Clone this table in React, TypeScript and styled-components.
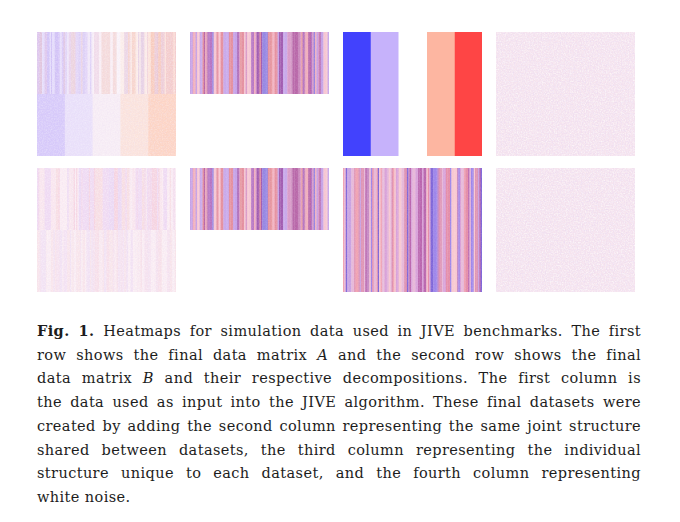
import React, { useMemo } from 'react'
import styled, { createGlobalStyle } from 'styled-components'

const GlobalStyle = createGlobalStyle`
  html, body {
    margin: 0;
    padding: 0;
    background: #fff;
  }
`

const Figure = styled.figure`
  margin: 0;
  padding: 32px 0 0 37px;
  width: 604px;
`

const Grid = styled.div`
  display: grid;
  grid-template-columns: repeat(4, 139px);
  column-gap: 14px;
  row-gap: 12px;
  align-items: start;
`

const Pair = styled.div`
  display: flex;
  gap: 28px;
`

const Map = styled.svg`
  display: block;
`

const Caption = styled.figcaption`
  margin-top: 27px;
  font-family: "DejaVu Serif", "Liberation Serif", serif;
  font-size: 14.5px;
  line-height: 23.7px;
  letter-spacing: 0.4px;
  color: #1d1d1d;
`

const Line = styled.span<{ $last?: boolean }>`
  display: block;
  white-space: nowrap;
  text-align: ${p => (p.$last ? 'left' : 'justify')};
  text-align-last: ${p => (p.$last ? 'left' : 'justify')};
`

const Label = styled.b`
  font-weight: 700;
`

const rng = (seed: number) => () => {
  seed = (seed + 0x6d2b79f5) | 0
  let t = Math.imul(seed ^ (seed >>> 15), 1 | seed)
  t = (t + Math.imul(t ^ (t >>> 7), 61 | t)) ^ t
  return ((t ^ (t >>> 14)) >>> 0) / 4294967296
}

const JOINT = ['#b574c3', '#c685ba', '#e48f9e', '#a05ab0', '#c8a8ea', '#9585e2', '#f1aebc', '#d99ac8', '#f6c6d2', '#b866a8', '#c5a0e6', '#e89aa0']
const INDIV = ['#dd8fb0', '#c9a2e2', '#b964ad', '#9c84ea', '#f0a2b2', '#e7b8d8', '#f8c8d0', '#c78ac4', '#d8a0d8', '#7f66d8', '#e48ca8']
const PALE = ['#eed8f6', '#f9dde0', '#f2d6ec', '#fbe9ef', '#e8d6f8', '#f7cfdc', '#fdf2f6']
const SHADE = ['#ffffff', '#ffffff', '#c9b6f2', '#e9c2d8', '#f3c0b2', '#d8c4f4', '#fff4f6']

const stripes = (seed: number, count: number, palette: string[]) => {
  const r = rng(seed)
  const out: string[] = []
  while (out.length < count) {
    const c = palette[Math.floor(r() * palette.length)]
    const run = 1 + Math.floor(r() * r() * 4)
    for (let i = 0; i < run && out.length < count; i++) out.push(c)
  }
  return out
}

type NoiseProps = { id: string; seed: number; w: number; h: number; y?: number; strength?: number }

const Noise = ({ id, seed, w, h, y = 0, strength = 1 }: NoiseProps) => (
  <>
    <defs>
      <filter id={`${id}w`} x="0" y="0" width="100%" height="100%">
        <feTurbulence type="fractalNoise" baseFrequency="0.75" numOctaves="2" seed={seed} />
        <feColorMatrix type="matrix" values="0 0 0 0 1  0 0 0 0 1  0 0 0 0 1  1.6 0 0 0 -0.62" />
      </filter>
      <filter id={`${id}p`} x="0" y="0" width="100%" height="100%">
        <feTurbulence type="fractalNoise" baseFrequency="0.75" numOctaves="2" seed={seed + 7} />
        <feColorMatrix type="matrix" values="0 0 0 0 0.8  0 0 0 0 0.68  0 0 0 0 0.9  0 1.6 0 0 -0.62" />
      </filter>
    </defs>
    <rect x="0" y={y} width={w} height={h} filter={`url(#${id}w)`} opacity={0.9 * strength} />
    <rect x="0" y={y} width={w} height={h} filter={`url(#${id}p)`} opacity={0.7 * strength} />
  </>
)

const Stripes = ({ cols, w, h, y = 0, opacity = 1 }: { cols: string[]; w: number; h: number; y?: number; opacity?: number }) => {
  const cw = w / cols.length
  return (
    <g opacity={opacity}>
      {cols.map((c, i) => (
        <rect key={i} x={i * cw} y={y} width={cw + 0.35} height={h} fill={c} />
      ))}
    </g>
  )
}

const BLOCKS_A = ['#d6c9fa', '#e9e0fa', '#f7edf5', '#fbe3dc', '#fdd4c4']

const DataA = () => {
  const top = useMemo(() => stripes(11, 110, SHADE), [])
  return (
    <Map width="139" height="124" viewBox="0 0 139 124">
      {BLOCKS_A.map((c, i) => (
        <rect key={i} x={i * 27.8} y="0" width="28.2" height="124" fill={c} />
      ))}
      <Stripes cols={top} w={139} h={62} opacity={0.4} />
      <Noise id="na" seed={2} w={139} h={124} strength={0.45} />
    </Map>
  )
}

const DataB = () => {
  const top = useMemo(() => stripes(23, 110, PALE), [])
  const bottom = useMemo(() => stripes(29, 110, PALE), [])
  return (
    <Map width="139" height="124" viewBox="0 0 139 124">
      <rect x="0" y="0" width="139" height="62" fill="#f7e1eb" />
      <rect x="0" y="62" width="139" height="62" fill="#f9ebf1" />
      <Stripes cols={top} w={139} h={62} opacity={0.75} />
      <Stripes cols={bottom} w={139} h={62} y={62} opacity={0.4} />
      <Noise id="nb" seed={5} w={139} h={124} strength={0.6} />
    </Map>
  )
}

const Joint = ({ id }: { id: string }) => {
  const cols = useMemo(() => stripes(41, 100, JOINT), [])
  return (
    <Map width="139" height="62" viewBox="0 0 139 62">
      <Stripes cols={cols} w={139} h={62} />
      <Noise id={id} seed={9} w={139} h={62} strength={0.15} />
    </Map>
  )
}

const Halves = ({ left, right }: { left: string; right: string }) => (
  <Map width="55.5" height="124" viewBox="0 0 55.5 124">
    <rect x="0" y="0" width="28" height="124" fill={left} />
    <rect x="27.75" y="0" width="27.75" height="124" fill={right} />
  </Map>
)

const IndividualB = () => {
  const cols = useMemo(() => stripes(77, 100, INDIV), [])
  return (
    <Map width="139" height="124" viewBox="0 0 139 124">
      <Stripes cols={cols} w={139} h={124} />
      <Noise id="ib" seed={13} w={139} h={124} strength={0.15} />
    </Map>
  )
}

const WhiteNoise = ({ id, seed }: { id: string; seed: number }) => (
  <Map width="139" height="124" viewBox="0 0 139 124">
    <rect x="0" y="0" width="139" height="124" fill="#f6e4ee" />
    <Noise id={id} seed={seed} w={139} h={124} />
  </Map>
)

export default function App() {
  return (
    <>
      <GlobalStyle />
      <Figure>
        <Grid>
          <DataA />
          <Joint id="ja" />
          <Pair>
            <Halves left="#4242fd" right="#c6b2fb" />
            <Halves left="#fdb6a1" right="#fe4545" />
          </Pair>
          <WhiteNoise id="wa" seed={31} />
          <DataB />
          <Joint id="jb" />
          <IndividualB />
          <WhiteNoise id="wb" seed={37} />
        </Grid>
        <Caption>
          <Line>
            <Label>Fig. 1.</Label> Heatmaps for simulation data used in JIVE benchmarks. The first
          </Line>
          <Line>
            row shows the final data matrix <i>A</i> and the second row shows the final
          </Line>
          <Line>
            data matrix <i>B</i> and their respective decompositions. The first column is
          </Line>
          <Line>the data used as input into the JIVE algorithm. These final datasets were</Line>
          <Line>created by adding the second column representing the same joint structure</Line>
          <Line>shared between datasets, the third column representing the individual</Line>
          <Line>structure unique to each dataset, and the fourth column representing</Line>
          <Line $last>white noise.</Line>
        </Caption>
      </Figure>
    </>
  )
}
